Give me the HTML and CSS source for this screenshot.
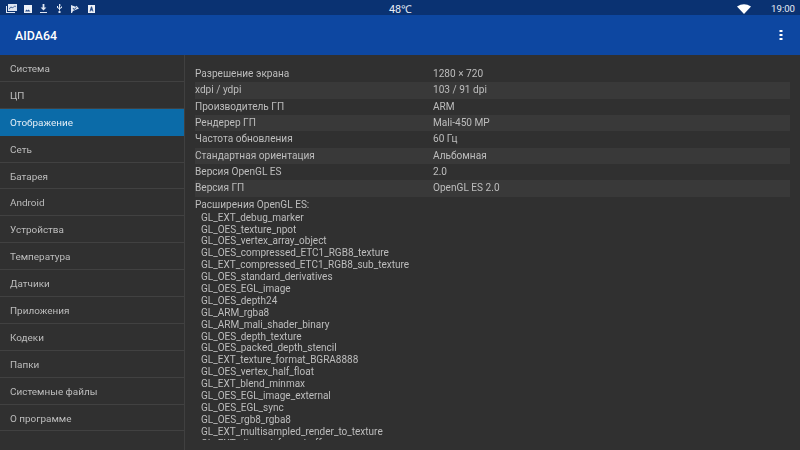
FILE: index.html
```html
<!DOCTYPE html>
<html lang="ru">
<head>
<meta charset="utf-8">
<title>AIDA64</title>
<link rel="stylesheet" href="styles.css">
</head>
<body>
<div class="status">
  <div class="status-icons">
    <svg class="ic" width="11" height="9" viewBox="0 0 11 9"><path fill="#dfe6f2" d="M2 0h9v7H2zM0 2h1v6h8v1H0z"/><path fill="#2a4f8c" d="M3 4.500l2-2 1.500 1L9 1.500l1 1v.8l-1-1-2.500 2L5 3.500 3 5.500z"/></svg>
    <svg class="ic ic-b" width="8" height="8" viewBox="0 0 8 8"><path fill="#eef2f8" d="M0 0h8v8H0z"/><path fill="#2a4f8c" d="M1 6.500l1.500-2 1 1 1-1 2 2z"/></svg>
    <svg class="ic" width="7" height="9" viewBox="0 0 7 9"><path fill="#dfe6f2" d="M2.600 0h1.800v3.500h2L3.500 6.500.6 3.500h2zM0 8h7v1H0z"/></svg>
    <svg class="ic" width="7" height="9" viewBox="0 0 7 9"><path fill="#dfe6f2" d="M3 0h1l1 1.500H4v5h-1V5L1 3.800V2h1v1.300l1 .7zM4 3.800l1-.5V2.500h1v1.300L4 5zM2.500 7h2v2h-2z"/></svg>
    <svg class="ic" width="8" height="8" viewBox="0 0 8 8"><path fill="#dfe6f2" d="M0 0l4.500 1.800 1-1L8 3.500l-2.500 1-3.500 1.500-1 2H0z"/><path fill="#2a4f8c" d="M1.800 2.800l1.700.9 1.700-1.800.5.5-2.200 2.500-1.700-1z"/></svg>
    <svg class="ic" width="7" height="8" viewBox="0 0 7 8"><path fill="#eef2f8" d="M0 0h7v8H0z"/><path fill="#2a4f8c" d="M3 1.500h1L5.500 6.500h-1l-.3-1H2.800l-.3 1h-1z"/></svg>
  </div>
  <div class="temp">48℃</div>
  <div class="status-right">
    <svg width="14" height="10" viewBox="0 0 14 10"><path fill="#fff" d="M0 2.500Q7-2 14 2.500L7 10z"/></svg>
    <span class="time">19:00</span>
  </div>
</div>
<header class="appbar">
  <div class="apptitle">AIDA64</div>
  <svg class="more" width="4" height="12" viewBox="0 0 4 12"><path fill="#fff" d="M.5 1h3v2h-3zM.5 5h3v2h-3zM.5 9h3v2h-3z"/></svg>
</header>
<main class="main">
  <nav class="side">
    <div class="item">Система</div>
    <div class="item">ЦП</div>
    <div class="item sel">Отображение</div>
    <div class="item">Сеть</div>
    <div class="item">Батарея</div>
    <div class="item">Android</div>
    <div class="item">Устройства</div>
    <div class="item">Температура</div>
    <div class="item">Датчики</div>
    <div class="item">Приложения</div>
    <div class="item">Кодеки</div>
    <div class="item">Папки</div>
    <div class="item">Системные файлы</div>
    <div class="item">О программе</div>
  </nav>
  <section class="content">
    <div class="row"><span class="k">Разрешение экрана</span><span>1280 × 720</span></div>
    <div class="row alt"><span class="k">xdpi / ydpi</span><span>103 / 91 dpi</span></div>
    <div class="row"><span class="k">Производитель ГП</span><span>ARM</span></div>
    <div class="row alt"><span class="k">Рендерер ГП</span><span>Mali-450 MP</span></div>
    <div class="row"><span class="k">Частота обновления</span><span>60 Гц</span></div>
    <div class="row alt"><span class="k">Стандартная ориентация</span><span>Альбомная</span></div>
    <div class="row"><span class="k">Версия OpenGL ES</span><span>2.0</span></div>
    <div class="row alt"><span class="k">Версия ГП</span><span>OpenGL ES 2.0</span></div>
    <div class="ext-title">Расширения OpenGL ES:</div>
    <div class="ext">
      <div>GL_EXT_debug_marker</div>
      <div>GL_OES_texture_npot</div>
      <div>GL_OES_vertex_array_object</div>
      <div>GL_OES_compressed_ETC1_RGB8_texture</div>
      <div>GL_EXT_compressed_ETC1_RGB8_sub_texture</div>
      <div>GL_OES_standard_derivatives</div>
      <div>GL_OES_EGL_image</div>
      <div>GL_OES_depth24</div>
      <div>GL_ARM_rgba8</div>
      <div>GL_ARM_mali_shader_binary</div>
      <div>GL_OES_depth_texture</div>
      <div>GL_OES_packed_depth_stencil</div>
      <div>GL_EXT_texture_format_BGRA8888</div>
      <div>GL_OES_vertex_half_float</div>
      <div>GL_EXT_blend_minmax</div>
      <div>GL_OES_EGL_image_external</div>
      <div>GL_OES_EGL_sync</div>
      <div>GL_OES_rgb8_rgba8</div>
      <div>GL_EXT_multisampled_render_to_texture</div>
      <div>GL_EXT_discard_framebuffer</div>
    </div>
  </section>
</main>
</body>
</html>
```
FILE: styles.css
```css
* { box-sizing: border-box; }
html, body { margin: 0; padding: 0; }
body {
  width: 800px;
  height: 450px;
  overflow: hidden;
  background: #303030;
  font-family: Roboto, sans-serif;
  color: #bdbdbd;
  display: flex;
  flex-direction: column;
}
.status {
  height: 15px;
  flex: none;
  background: #0a3272;
  display: grid;
  grid-template-columns: 1fr auto 1fr;
  align-items: center;
  padding: 0 5px 0 6px;
  color: #e8edf5;
}
.status-icons { display: flex; align-items: center; gap: 8.5px; }
.ic { display: block; }
.ic-b { margin-left: -2px; }
.temp { font-size: 10.8px; line-height: 15px; padding-top: 2px; }
.status-right { display: flex; align-items: center; justify-content: flex-end; gap: 20px; }
.time { font-size: 9.6px; line-height: 15px; }
.appbar {
  height: 40px;
  flex: none;
  background: #0d47a1;
  display: flex;
  align-items: center;
  justify-content: space-between;
  padding: 0 17px 0 15px;
}
.apptitle { color: #fff; font-size: 12.4px; font-weight: 500; }
.more { display: block; }
.main { flex: 1; display: flex; min-height: 0; filter: blur(0.3px); }
.side {
  width: 185px;
  flex: none;
  border-right: 1px solid #404040;
}
.item {
  height: 26.9px;
  padding: 1px 0 0 10px;
  display: flex;
  align-items: center;
  font-size: 9.95px;
  border-bottom: 1px solid #414141;
}
.sel { background: #0b6ba8; color: #e4eef6; border-bottom-color: #0b6ba8; }
.content {
  flex: 1;
  min-width: 0;
  padding: 11px 10px 10px 10px;
  font-size: 10.1px;
  overflow: hidden;
}
.row {
  display: grid;
  grid-template-columns: 238px 1fr;
  height: 16.33px;
  line-height: 16.33px;
}
.k { white-space: nowrap; }
.alt { background: #393939; }
.ext-title { margin-top: 1px; height: 14px; line-height: 14px; }
.ext { padding-left: 6px; height: 228.5px; overflow: hidden; font-size: 10px; }
.ext div { height: 11.9px; line-height: 11.9px; white-space: nowrap; }
```
